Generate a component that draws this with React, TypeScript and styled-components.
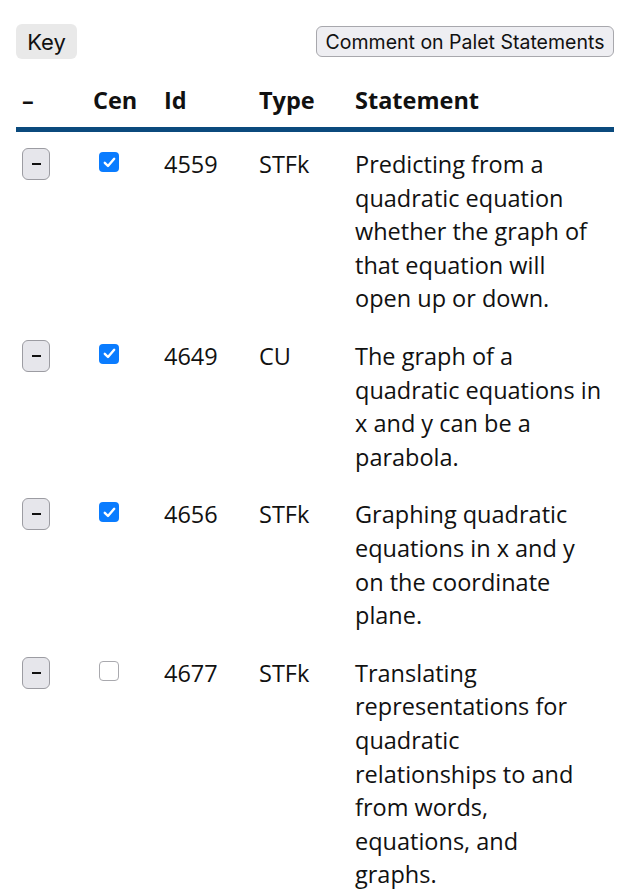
import React from "react";
import styled, { createGlobalStyle } from "styled-components";

const Global = createGlobalStyle`
  html, body { margin: 0; padding: 0; background: #fff; }
  body { font-family: "Open Sans", sans-serif; color: #111; }
`;

const Page = styled.div`
  padding: 24px 26px 0 16px;
`;

const Toolbar = styled.div`
  display: flex;
  justify-content: space-between;
  align-items: flex-start;
`;

const KeyButton = styled.button`
  font-family: Inter, "Liberation Sans", sans-serif;
  font-size: 22px;
  color: #111;
  background: #e9e9e9;
  border: none;
  border-radius: 6px;
  height: 35px;
  width: 61px;
  padding: 0;
`;

const CommentButton = styled.button`
  font-family: Inter, "Liberation Sans", sans-serif;
  font-size: 19.5px;
  color: #111;
  background: #eeeef2;
  border: 1px solid #a8a8ad;
  border-radius: 6px;
  height: 31px;
  width: 298px;
  margin-top: 2px;
  padding: 0;
`;

const Grid = styled.div`
  display: grid;
  grid-template-columns: 71px 71px 95px 96px 1fr;
`;

const HeadCell = styled.div`
  font-weight: 700;
  font-size: 23.5px;
  line-height: 30px;
  padding: 26px 0 12px 6px;
  border-bottom: 5px solid #0b4a7d;
  margin-bottom: 4px;
`;

const Cell = styled.div`
  font-size: 23.5px;
  line-height: 33.6px;
  padding: 12px 9px 12px 6px;
`;

const ControlCell = styled(Cell)`
  display: flex;
  align-items: flex-start;
`;

const MinusButton = styled.button`
  width: 28px;
  height: 32px;
  margin-top: 0;
  background: #e6e6eb;
  border: 1px solid #9c9ca2;
  border-radius: 6px;
  padding: 0;
  display: flex;
  align-items: center;
  justify-content: center;
  &::before {
    content: "";
    width: 9px;
    height: 2px;
    background: #111;
  }
`;

const Check = styled.span<{ $on: boolean }>`
  margin: 4px 0 0 6px;
  width: 20px;
  height: 20px;
  box-sizing: border-box;
  border-radius: 4px;
  background: ${(p) => (p.$on ? "#0a7cff" : "#fff")};
  border: ${(p) => (p.$on ? "none" : "1px solid #a9a9ae")};
  display: flex;
  align-items: center;
  justify-content: center;
`;

const rows = [
  { on: true, id: "4559", type: "STFk", text: "Predicting from a quadratic equation whether the graph of that equation will open up or down." },
  { on: true, id: "4649", type: "CU", text: "The graph of a quadratic equations in x and y can be a parabola." },
  { on: true, id: "4656", type: "STFk", text: "Graphing quadratic equations in x and y on the coordinate plane." },
  { on: false, id: "4677", type: "STFk", text: "Translating representations for quadratic relationships to and from words, equations, and graphs." },
];

export default function App() {
  return (
    <>
      <Global />
      <Page>
        <Toolbar>
          <KeyButton>Key</KeyButton>
          <CommentButton>Comment on Palet Statements</CommentButton>
        </Toolbar>
        <Grid>
          <HeadCell>–</HeadCell>
          <HeadCell>Cen</HeadCell>
          <HeadCell>Id</HeadCell>
          <HeadCell>Type</HeadCell>
          <HeadCell>Statement</HeadCell>
          {rows.map((r) => (
            <React.Fragment key={r.id}>
              <ControlCell>
                <MinusButton aria-label="remove" />
              </ControlCell>
              <ControlCell>
                <Check $on={r.on}>
                  {r.on && (
                    <svg width="13" height="11" viewBox="0 0 13 11">
                      <path d="M1.8 5.8 L5 9 L11.2 1.8" fill="none" stroke="#fff" strokeWidth="2.4" strokeLinecap="round" strokeLinejoin="round" />
                    </svg>
                  )}
                </Check>
              </ControlCell>
              <Cell>{r.id}</Cell>
              <Cell>{r.type}</Cell>
              <Cell>{r.text}</Cell>
            </React.Fragment>
          ))}
        </Grid>
      </Page>
    </>
  );
}
